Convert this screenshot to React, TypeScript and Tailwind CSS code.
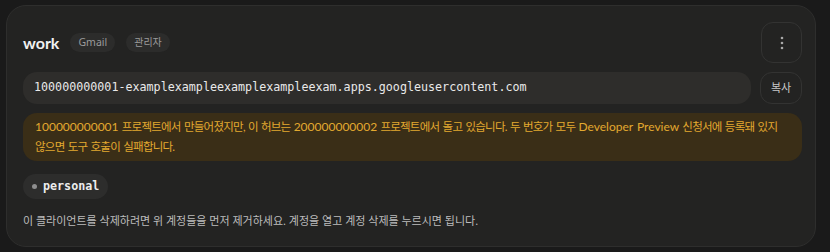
export default function App() {
  return (
    <div className="w-[830px] h-[252px] bg-[#1a1a1a] pt-[5px] pl-[6px] font-['Noto_Sans','Noto_Sans_CJK_KR',sans-serif]">
      <section className="w-[810px] h-[242px] rounded-[20px] border border-[#2e2e2d] bg-[#232322] pl-4 pr-[13px] pt-4">
        <div className="flex items-center justify-between">
          <div className="flex items-center gap-[11px]">
            <h2 className="font-['Lato',sans-serif] text-[16px] font-bold text-[#f1f1f1]">work</h2>
            <div className="flex items-center gap-[11px]">
              <span className="rounded-full bg-[#2c2c2b] px-[8px] py-[2px] text-[10.5px] text-[#9b9b9b]">Gmail</span>
              <span className="rounded-full bg-[#2c2c2b] px-[8px] py-[2px] text-[10px] text-[#9b9b9b]">관리자</span>
            </div>
          </div>
          <button className="flex h-[41px] w-[41px] items-center justify-center rounded-[12px] border border-[#333332] bg-[#232322]">
            <svg width="4" height="14" viewBox="0 0 4 14" fill="#a8a8a8">
              <circle cx="2" cy="2" r="1.3" />
              <circle cx="2" cy="7" r="1.3" />
              <circle cx="2" cy="12" r="1.3" />
            </svg>
          </button>
        </div>

        <div className="mt-[9px] flex items-center gap-[9px]">
          <div className="flex h-[32px] flex-1 items-center rounded-[14px] bg-[#2e2d2b] pl-[11px] font-['DejaVu_Sans_Mono',monospace] text-[11.7px] text-[#e9e9e9]">
            100000000001-examplexampleexamplexampleexam.apps.googleusercontent.com
          </div>
          <button className="h-[32px] w-[42px] rounded-[12px] border border-[#333332] text-[11px] text-[#c9c9c9]">복사</button>
        </div>

        <div className="mt-[9px] break-keep rounded-[14px] bg-[#3a2e17] px-3 py-[4px] font-['Lato','Noto_Sans_CJK_KR',sans-serif] text-[11.5px] leading-[20px] tracking-[-0.75px] [word-spacing:1px] text-[#e3a92f]">
          <span className="text-[12px] tracking-normal">100000000001</span> 프로젝트에서 만들어졌지만, 이 허브는{' '}
          <span className="text-[12px] tracking-normal">200000000002</span> 프로젝트에서 돌고 있습니다. 두 번호가 모두{' '}
          <span className="text-[12px] tracking-normal">Developer Preview</span> 신청서에 등록돼 있지 않으면 도구 호출이 실패합니다.
        </div>

        <div className="mt-[13px] flex">
          <span className="flex h-[25px] items-center gap-[6px] rounded-full bg-[#2d2d2c] pl-[9px] pr-[9px]">
            <span className="h-[5px] w-[5px] rounded-full bg-[#8e8e8e]" />
            <span className="font-['DejaVu_Sans_Mono',monospace] text-[11.7px] font-bold text-[#ececec]">personal</span>
          </span>
        </div>

        <p className="mt-[14px] text-[11px] text-[#bdbdbd]">
          이 클라이언트를 삭제하려면 위 계정들을 먼저 제거하세요. 계정을 열고 계정 삭제를 누르시면 됩니다.
        </p>
      </section>
    </div>
  );
}
